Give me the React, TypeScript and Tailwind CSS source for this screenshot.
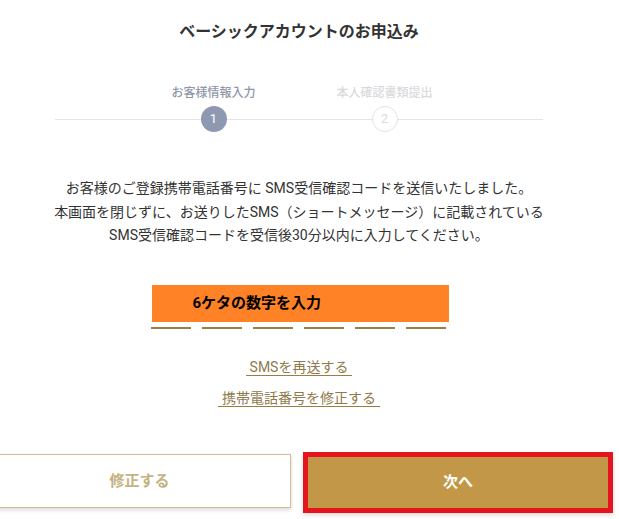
import React from "react";

export default function App() {
  const font = { fontFamily: "Roboto, 'Noto Sans CJK JP', sans-serif" };
  return (
    <div
      className="w-[619px] h-[519px] overflow-hidden bg-white text-[#333]"
      style={font}
    >
      <div className="w-[598px] flex flex-col items-center">
        {/* Title */}
        <div className="h-[64px] flex items-center justify-center text-[16px] font-bold text-[#333]">
          ベーシックアカウントのお申込み
        </div>

        {/* Steps */}
        <div className="relative w-[488px] mt-[20px] flex justify-center">
          <div className="absolute left-0 right-0 top-[35px] h-px bg-[#e4e4e6]" />
          <div className="w-[171px] flex flex-col items-center">
            <div className="h-[18px] leading-[18px] text-[12px] font-medium text-[#8f97a8]">
              お客様情報入力
            </div>
            <div className="relative z-10 mt-[4px] w-[26px] h-[26px] rounded-full bg-[#8e99b1] flex items-center justify-center text-white text-[13px]">
              1
            </div>
          </div>
          <div className="w-[171px] flex flex-col items-center">
            <div className="h-[18px] leading-[18px] text-[12px] font-medium text-[#dadadd]">
              本人確認書類提出
            </div>
            <div className="relative z-10 mt-[4px] w-[26px] h-[26px] rounded-full bg-white border border-[#e4e4e6] flex items-center justify-center text-[#dadadd] text-[13px]">
              2
            </div>
          </div>
        </div>

        {/* Message */}
        <div className="mt-[45px] text-center text-[14px] leading-[23.5px] text-[#333]">
          <div>お客様のご登録携帯電話番号に SMS受信確認コードを送信いたしました。</div>
          <div>本画面を閉じずに、お送りしたSMS（ショートメッセージ）に記載されている</div>
          <div>SMS受信確認コードを受信後30分以内に入力してください。</div>
        </div>

        {/* Code input */}
        <div className="mt-[37px] w-[298px] ml-[1px] flex flex-col">
          <div className="ml-[1px] w-[297px] h-[37px] bg-[#ff8226] flex items-center pl-[41px] text-[15px] font-bold text-black">
            6ケタの数字を入力
          </div>
          <div className="mt-[5px] flex gap-[11px]">
            <div className="w-[40px] h-[2.5px] bg-[#9a8045]" />
            <div className="w-[40px] h-[2.5px] bg-[#9a8045]" />
            <div className="w-[40px] h-[2.5px] bg-[#9a8045]" />
            <div className="w-[40px] h-[2.5px] bg-[#9a8045]" />
            <div className="w-[40px] h-[2.5px] bg-[#9a8045]" />
            <div className="w-[40px] h-[2.5px] bg-[#9a8045]" />
          </div>
        </div>

        {/* Links */}
        <div className="mt-[30px] flex flex-col items-center gap-[14px]">
          <a className="inline-block px-[4px] text-[14px] leading-[16px] text-[#8f7a4c] border-b-[1.5px] border-[#9a7d40]">
            SMSを再送する
          </a>
          <a className="inline-block px-[4px] text-[14px] leading-[16px] text-[#8f7a4c] border-b-[1.5px] border-[#9a7d40]">
            携帯電話番号を修正する
          </a>
        </div>
      </div>

      {/* Buttons */}
      <div className="mt-[45px] ml-[-12px] flex items-start gap-[12px]">
        <button className="mt-[2px] w-[303px] h-[54px] bg-white border border-[#cdbf93] shadow-[0_2px_4px_rgba(0,0,0,0.15)] flex items-center justify-center text-[15px] font-bold text-[#c4b27f]">
          修正する
        </button>
        <button className="w-[310px] h-[61px] bg-[#c29848] border-[5px] border-[#e5141f] shadow-[0_2px_4px_rgba(0,0,0,0.15)] flex items-center justify-center text-[15px] font-bold text-white">
          次へ
        </button>
      </div>
    </div>
  );
}
